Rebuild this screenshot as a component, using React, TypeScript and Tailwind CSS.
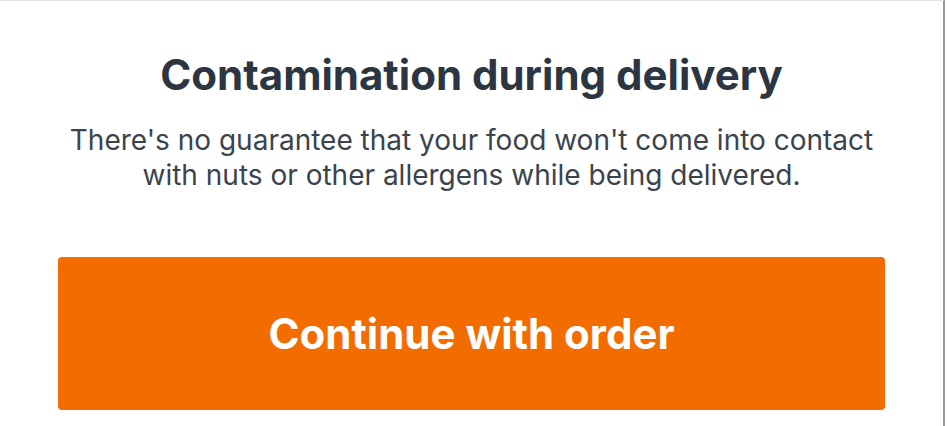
import React from 'react';

export default function App() {
  return (
    <div className="h-[426px] w-full overflow-hidden bg-white" style={{ fontFamily: 'Inter, "Noto Sans", sans-serif' }}>
      <div className="flex h-full w-[945px] flex-col items-center border-t border-r-2 border-t-[#e2e2e2] border-r-[#9a9a9a] px-[58px] pt-[50px]">
        <h2 className="text-center text-[42px] leading-[48px] font-bold text-[#2b3642]">
          Contamination during delivery
        </h2>
        <p className="mt-[24px] text-center text-[28px] leading-[35px] text-[#3b434d]">
          There's no guarantee that your food won't come into contact
          <br />
          with nuts or other allergens while being delivered.
        </p>
        <button className="mt-[64px] flex h-[153px] w-full items-center justify-center rounded-[4px] bg-[#f36c00] text-[42px] font-bold text-white">
          Continue with order
        </button>
      </div>
    </div>
  );
}
